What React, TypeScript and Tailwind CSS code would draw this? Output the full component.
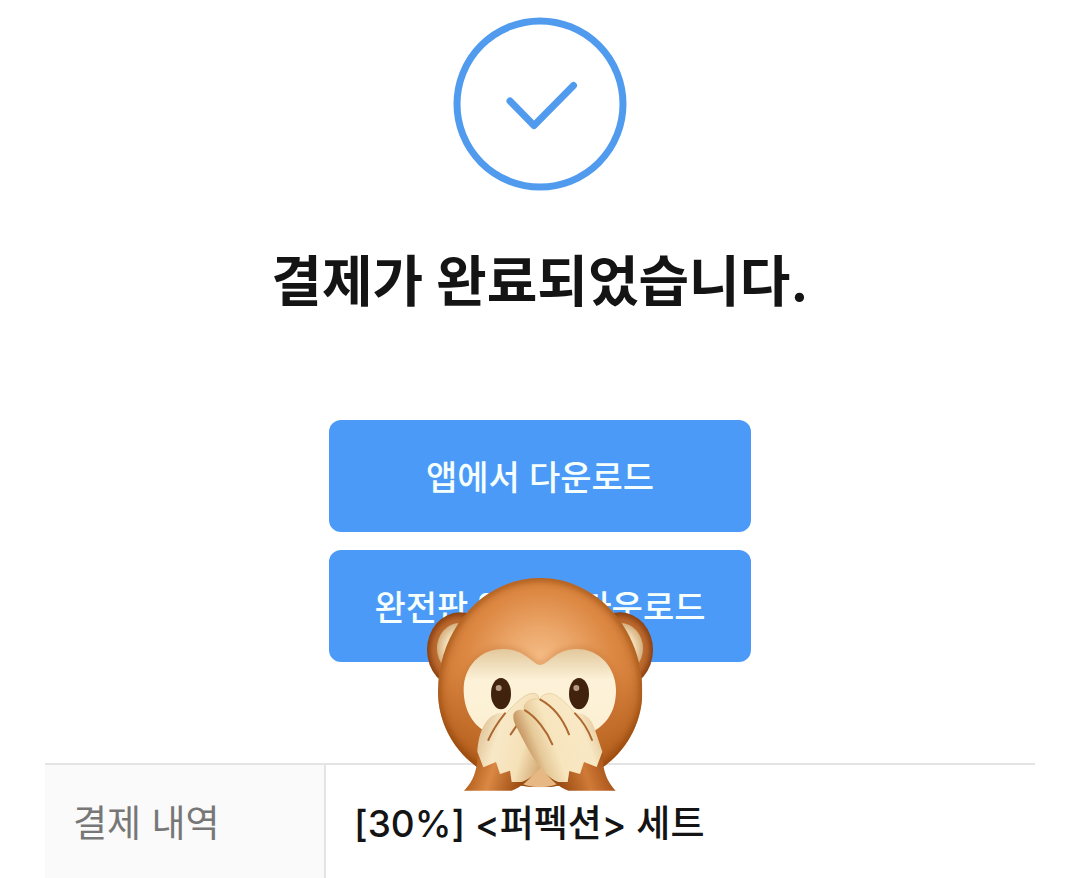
import React from 'react';

// ─── Icons ────────────────────────────────────────────────────────────────────

function CheckCircle() {
  return (
    <svg viewBox="0 0 174 174" className="size-[174px]" fill="none" stroke="#519bef" aria-hidden="true">
      <circle cx="87" cy="87" r="83" strokeWidth="7" />
      <path d="M57 84 81 108.500 120.500 68.500" strokeWidth="7" strokeLinecap="round" strokeLinejoin="round" />
    </svg>
  );
}

function MonkeySticker({ className }: { className?: string }) {
  return (
    <svg viewBox="0 0 720 675" className={className} aria-hidden="true">
      <defs>
        <radialGradient id="head" gradientUnits="userSpaceOnUse" cx="360" cy="285" r="375">
          <stop offset="0" stopColor="#f7c08b" />
          <stop offset="0.3" stopColor="#eba669" />
          <stop offset="0.6" stopColor="#dc8742" />
          <stop offset="0.85" stopColor="#cb7632" />
          <stop offset="1" stopColor="#a85719" />
        </radialGradient>
        <linearGradient id="headShade" x1="0" y1="0" x2="0" y2="1">
          <stop offset="0.45" stopColor="#a34c0c" stopOpacity="0" />
          <stop offset="0.9" stopColor="#a34c0c" stopOpacity="0.5" />
        </linearGradient>
        <radialGradient id="ear" cx="0.5" cy="0.5" r="0.5">
          <stop offset="0.6" stopColor="#c67636" />
          <stop offset="0.82" stopColor="#b4622a" />
          <stop offset="1" stopColor="#8a400f" />
        </radialGradient>
        <radialGradient id="earInner" cx="0.5" cy="0.5" r="0.5">
          <stop offset="0.6" stopColor="#f3dfba" />
          <stop offset="1" stopColor="#d4af7d" />
        </radialGradient>
        <linearGradient id="face" gradientUnits="userSpaceOnUse" x1="0" y1="237" x2="0" y2="500">
          <stop offset="0" stopColor="#e3c79c" />
          <stop offset="0.14" stopColor="#ecd9b4" />
          <stop offset="0.36" stopColor="#fdf2d9" />
          <stop offset="1" stopColor="#fcefd2" />
        </linearGradient>
        <linearGradient id="handBack" gradientUnits="userSpaceOnUse" x1="180" y1="500" x2="375" y2="560">
          <stop offset="0" stopColor="#e3c9a0" />
          <stop offset="0.25" stopColor="#f8e8c6" />
          <stop offset="0.65" stopColor="#f5e1b8" />
          <stop offset="1" stopColor="#d3a771" />
        </linearGradient>
        <linearGradient id="handFront" gradientUnits="userSpaceOnUse" x1="315" y1="535" x2="540" y2="450">
          <stop offset="0" stopColor="#c69662" />
          <stop offset="0.16" stopColor="#e6c998" />
          <stop offset="0.36" stopColor="#f7e5be" />
          <stop offset="0.75" stopColor="#f8e8c4" />
          <stop offset="1" stopColor="#dfc295" />
        </linearGradient>
        <linearGradient id="wristLeft" gradientUnits="userSpaceOnUse" x1="150" y1="610" x2="295" y2="660">
          <stop offset="0" stopColor="#b5611f" />
          <stop offset="0.4" stopColor="#db8844" />
          <stop offset="1" stopColor="#9b4c12" />
        </linearGradient>
        <linearGradient id="wristRight" gradientUnits="userSpaceOnUse" x1="570" y1="610" x2="425" y2="660">
          <stop offset="0" stopColor="#a9541a" />
          <stop offset="0.45" stopColor="#cf7a37" />
          <stop offset="1" stopColor="#9b4c12" />
        </linearGradient>
        <filter id="soft" x="-20%" y="-20%" width="140%" height="140%">
          <feGaussianBlur stdDeviation="9" />
        </filter>
        <clipPath id="headClip">
          <path d="M360 24C529 24 667 177 667 365C667 524 529 652 360 652S54 524 54 365C54 177 191 24 360 24Z" />
        </clipPath>
      </defs>

      {/* Ears */}
      <ellipse cx="120" cy="240" rx="99" ry="113" fill="url(#ear)" />
      <ellipse cx="600" cy="240" rx="99" ry="113" fill="url(#ear)" />
      <ellipse cx="118" cy="235" rx="67" ry="76" fill="url(#earInner)" />
      <ellipse cx="602" cy="235" rx="67" ry="76" fill="url(#earInner)" />

      {/* Head */}
      <g clipPath="url(#headClip)">
        <rect x="54" y="24" width="613" height="628" fill="url(#head)" />
        <rect x="54" y="24" width="613" height="628" fill="url(#headShade)" />
        <path
          d="M360 24C529 24 667 177 667 365C667 524 529 652 360 652S54 524 54 365C54 177 191 24 360 24Z"
          fill="none"
          stroke="#853b0a"
          strokeOpacity="0.6"
          strokeWidth="18"
          filter="url(#soft)"
        />
        <path
          d="M360 285C385 285 405 237 470 237C540 237 588 295 588 360C588 430 555 470 515 490H205C160 470 131 420 131 360C131 290 180 237 250 237C315 237 340 285 360 285Z"
          fill="none"
          stroke="#b9662a"
          strokeOpacity="0.5"
          strokeWidth="12"
          filter="url(#soft)"
        />
        <ellipse cx="360" cy="570" rx="110" ry="82" fill="#e8b884" />
      </g>
      <path
        d="M360 285C385 285 405 237 470 237C540 237 588 295 588 360C588 430 555 465 515 488L420 570H300L205 488C160 470 131 420 131 360C131 290 180 237 250 237C315 237 340 285 360 285Z"
        fill="url(#face)"
      />

      {/* Eyes */}
      <ellipse cx="243" cy="371" rx="30" ry="47" fill="#40220d" />
      <ellipse cx="477" cy="371" rx="30" ry="47" fill="#40220d" />
      <circle cx="236" cy="354" r="9" fill="#b59b87" />
      <circle cx="469" cy="354" r="9" fill="#b59b87" />

      {/* Wrists */}
      <path
        d="M172 550C174 606 154 640 132 662H275C302 652 330 628 345 605L290 570Z"
        fill="url(#wristLeft)"
      />
      <path
        d="M548 550C546 606 566 640 587 662H445C418 652 390 628 375 605L430 570Z"
        fill="url(#wristRight)"
      />

      {/* Back hand */}
      <path
        d="M172 545C175 495 192 443 230 431C240 428 250 429 258 431C292 392 320 368 342 370C352 371 358 380 357 392L362 594C345 612 325 630 305 636H275L270 602L240 612L228 576L190 592Z"
        fill="url(#handBack)"
      />
      <path d="M258 431C292 392 320 368 342 370C352 371 357 378 356 388" fill="none" stroke="#d9b680" strokeOpacity="0.5" strokeWidth="3" />
      <g fill="none" stroke="#ad682f" strokeWidth="6" strokeLinecap="round">
        <path d="M255 430C235 455 218 480 205 510" />
        <path d="M292 464 272 493" />
      </g>

      {/* Front hand */}
      <path
        d="M280 440C279 426 290 416 313 420C307 402 327 382 359 388C364 372 390 364 410 377C432 392 449 410 464 429C495 428 514 446 523 474L547 545L530 591L492 576L480 612L448 603L443 636H415C365 618 329 548 286 464C282 456 280 448 280 440Z"
        fill="url(#handFront)"
      />
      <g fill="none" stroke="#dfbd85" strokeOpacity="0.5" strokeWidth="3">
        <path d="M359 388C364 372 390 364 410 377C432 392 449 410 464 429" />
        <path d="M313 420C307 402 327 382 359 388" />
      </g>
      <g fill="none" stroke="#ad682f" strokeWidth="6" strokeLinecap="round">
        <path d="M315 421C348 440 381 484 397 523" />
        <path d="M361 389C400 410 430 450 447 493" />
        <path d="M465 430C489 454 505 480 516 510" />
      </g>
    </svg>
  );
}

// ─── Page ─────────────────────────────────────────────────────────────────────

const downloads = ['앱에서 다운로드', '완전판 앱에서 다운로드'];

const orderRows = [{ label: '결제 내역', value: '[30%] <퍼펙션> 세트' }];

export default function App() {
  return (
    <main className="flex flex-col items-center bg-white px-[45px] pt-[17px] font-['Inter','Noto_Sans_CJK_KR',sans-serif] text-[#141414]">
      <CheckCircle />

      <h1 className="mt-[58px] text-center text-[55px] leading-[64px] font-bold">결제가 완료되었습니다.</h1>

      <div className="relative mt-[107px] flex w-full max-w-[422px] flex-col gap-[18px]">
        {downloads.map((label) => (
          <button
            key={label}
            type="button"
            className="w-full rounded-xl bg-[#4c9af8] pt-[34px] pb-[30px] text-center text-[34px] leading-[48px] font-medium text-[#f5fffd]"
          >
            {label}
          </button>
        ))}
        <MonkeySticker className="pointer-events-none absolute top-[150px] left-1/2 h-[225px] w-[240px] -translate-x-1/2" />
      </div>

      <table className="mt-[101px] w-full border-t-2 border-[#e4e4e4]">
        <tbody>
          {orderRows.map(({ label, value }) => (
            <tr key={label}>
              <th
                scope="row"
                className="w-[280px] border-r-2 border-[#e4e4e4] bg-[#fafafa] pt-[34px] pb-[30px] pl-7 text-left text-[37px] leading-[50px] font-normal text-[#777777]"
              >
                {label}
              </th>
              <td className="pt-[34px] pb-[30px] pl-7 text-[37px] leading-[50px] font-medium">{value}</td>
            </tr>
          ))}
        </tbody>
      </table>
    </main>
  );
}
